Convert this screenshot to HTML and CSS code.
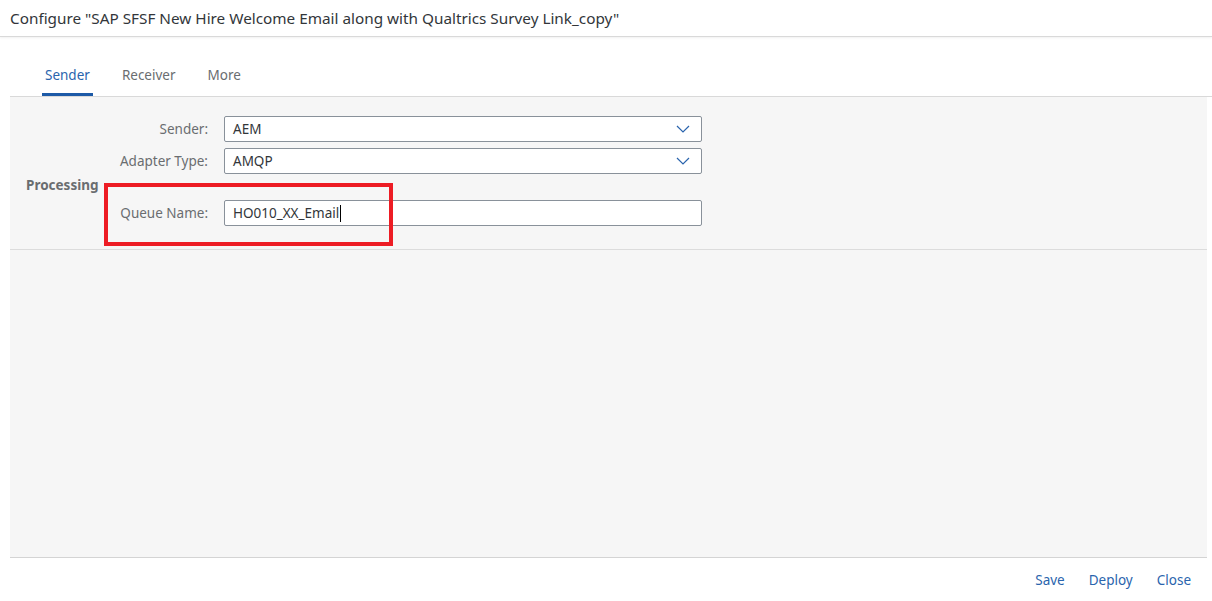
FILE: index.html
```html
<!DOCTYPE html>
<html lang="en">
<head>
<meta charset="utf-8">
<title>Configure</title>
<link rel="stylesheet" href="styles.css">
</head>
<body>
<header class="title-bar">
  <h1 class="title">Configure "SAP SFSF New Hire Welcome Email along with Qualtrics Survey Link_copy"</h1>
</header>
<main class="dialog">
  <nav class="tabs">
    <span class="tab active">Sender</span>
    <span class="tab">Receiver</span>
    <span class="tab">More</span>
  </nav>
  <section class="content">
    <div class="form">
      <label class="label r1">Sender:</label>
      <div class="field select r1"><span>AEM</span>
        <svg class="chev" width="14" height="8" viewBox="0 0 14 8"><path d="M1 1 L7 7 L13 1" fill="none" stroke="#2a64ad" stroke-width="1.2"/></svg>
      </div>
      <label class="label r2">Adapter Type:</label>
      <div class="field select r2"><span>AMQP</span>
        <svg class="chev" width="14" height="8" viewBox="0 0 14 8"><path d="M1 1 L7 7 L13 1" fill="none" stroke="#2a64ad" stroke-width="1.2"/></svg>
      </div>
      <div class="group-title">Processing</div>
      <label class="label r4">Queue Name:</label>
      <div class="field r4"><span>HO010_XX_Email</span><span class="caret"></span></div>
      <div class="highlight"></div>
    </div>
    <div class="rest"></div>
  </section>
  <footer class="footer">
    <button class="btn">Save</button>
    <button class="btn">Deploy</button>
    <button class="btn">Close</button>
  </footer>
</main>
</body>
</html>
```

FILE: styles.css
```css
html, body {
  margin: 0;
  padding: 0;
  background: #ffffff;
  font-family: "Noto Sans", "Liberation Sans", sans-serif;
  color: #32363a;
}

.title-bar {
  height: 36px;
  display: flex;
  align-items: center;
  padding-left: 10px;
  border-bottom: 1px solid #d9d9d9;
  box-shadow: 0 1px 2px rgba(0,0,0,0.06);
}

.title {
  margin: 0;
  font-size: 15.3px;
  font-weight: normal;
  color: #32363a;
}

.dialog {
  margin-left: 10px;
  display: flex;
  flex-direction: column;
}

.tabs {
  display: flex;
  align-items: flex-end;
  gap: 26px;
  padding-left: 32px;
  border-bottom: 1px solid #d9d9d9;
  box-sizing: border-box;
  height: 60px;
}

.tab {
  font-size: 13.5px;
  color: #6a6d70;
  padding: 4px 3px 0;
  height: 36px;
  line-height: 22px;
  box-sizing: border-box;
  border-bottom: 3px solid transparent;
}

.tab.active {
  color: #2a64ad;
  border-bottom-color: #1d5aa7;
}

.content {
  margin-right: 5px;
  background: #f6f6f6;
  height: 460px;
  border-bottom: 1px solid #d4d4d4;
  display: flex;
  flex-direction: column;
}

.form {
  position: relative;
  display: grid;
  grid-template-columns: 84px 98px 16px 478px;
  grid-template-rows: 26px 26px 14px 26px;
  row-gap: 6px;
  padding: 19px 0 23px 16px;
  border-bottom: 1px solid #dcdcdc;
}

.label {
  grid-column: 2;
  justify-self: end;
  align-self: center;
  font-size: 13.5px;
  color: #6a6d70;
  white-space: nowrap;
}

.r1 { grid-row: 1; }
.r2 { grid-row: 2; }
.r4 { grid-row: 4; }

.field {
  grid-column: 4;
  background: #ffffff;
  border: 1px solid #89919a;
  border-radius: 2px;
  display: flex;
  align-items: center;
  padding: 0 8px;
  font-size: 13.5px;
  color: #32363a;
  box-sizing: border-box;
}

.select {
  justify-content: space-between;
}

.chev {
  margin-right: 3px;
}

.caret {
  display: inline-block;
  width: 1px;
  height: 17px;
  background: #000;
  margin-left: 1px;
}

.group-title {
  grid-column: 1 / span 2;
  grid-row: 3;
  align-self: center;
  font-size: 13.5px;
  font-weight: bold;
  color: #6a6d70;
  margin-top: -4px;
  white-space: nowrap;
}

.highlight {
  position: absolute;
  left: 94px;
  top: 86px;
  width: 281px;
  height: 55px;
  border: 4px solid #ed1c24;
}

.footer {
  height: 43px;
  display: flex;
  justify-content: flex-end;
  align-items: center;
  padding-right: 9px;
}

.btn {
  background: none;
  border: none;
  font-family: inherit;
  font-size: 13.5px;
  color: #2a64ad;
  padding: 0 12px;
  height: 32px;
}
```
